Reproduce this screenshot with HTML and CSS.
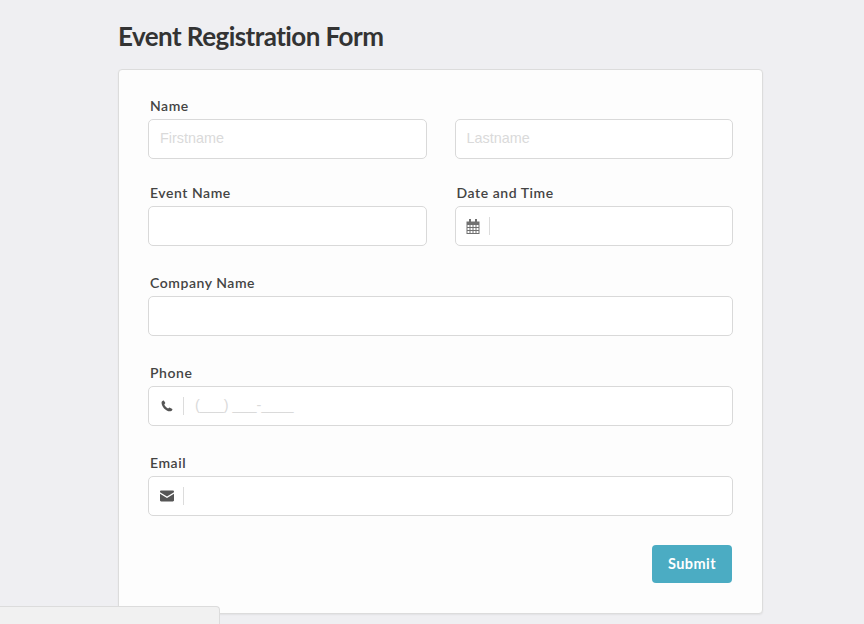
FILE: index.html
```html
<!DOCTYPE html>
<html lang="en">
<head>
<meta charset="utf-8">
<title>Event Registration Form</title>
<link rel="stylesheet" href="styles.css">
</head>
<body>
<main class="page">
  <h1 class="title">Event Registration Form</h1>
  <form class="card">
    <div class="row row-first">
      <div class="field">
        <label class="label">Name</label>
        <div class="box"><input class="input" placeholder="Firstname"></div>
      </div>
      <div class="field">
        <label class="label">&nbsp;</label>
        <div class="box"><input class="input" placeholder="Lastname"></div>
      </div>
    </div>
    <div class="row">
      <div class="field">
        <label class="label">Event Name</label>
        <div class="box"><input class="input"></div>
      </div>
      <div class="field">
        <label class="label">Date and Time</label>
        <div class="box">
          <span class="addon">
            <svg class="icon" width="14" height="15" viewBox="0 0 14 15"><path fill="#707070" fill-rule="evenodd" d="M3 0h2v2.500h4V0h2v2.500h2.500V15H.5V2.500H3zM1.500 6v2h2V6zm3 0v2h2V6zm3 0v2h2V6zm3 0v2h2V6zm-9 3v2h2V9zm3 0v2h2V9zm3 0v2h2V9zm3 0v2h2V9zm-9 3v2h2v-2zm3 0v2h2v-2zm3 0v2h2v-2zm3 0v2h2v-2z"/></svg>
          </span>
          <input class="input input-addon">
        </div>
      </div>
    </div>
    <div class="row row-wide">
      <div class="field">
        <label class="label">Company Name</label>
        <div class="box"><input class="input"></div>
      </div>
    </div>
    <div class="row row-wide">
      <div class="field">
        <label class="label">Phone</label>
        <div class="box">
          <span class="addon addon-short">
            <svg class="icon" width="12" height="12" viewBox="0 0 11 11"><path fill="#555" d="M2.600.4 4 2.800 3 4.100c.6 1.500 1.900 2.900 3.500 3.700l1.200-1 2.700 1.500c.3.900-.7 1.900-1.700 2.100C4.600 10.800.4 6 .5 2.300.5 1.300 1.500.3 2.600.4z"/></svg>
          </span>
          <input class="input input-addon" placeholder="(___) ___-____">
        </div>
      </div>
    </div>
    <div class="row row-wide">
      <div class="field">
        <label class="label">Email</label>
        <div class="box">
          <span class="addon addon-short">
            <svg class="icon" width="14" height="12" viewBox="0 0 14 11"><path fill="#555" d="M1.200 0h11.600C13.500 0 14 .5 14 1.200v.5L7 6 0 1.700v-.5C0 .5.500 0 1.200 0zM0 3.200 7 7.500l7-4.300v6.600c0 .7-.5 1.200-1.200 1.200H1.200C.5 11 0 10.500 0 9.800z"/></svg>
          </span>
          <input class="input input-addon">
        </div>
      </div>
    </div>
    <div class="actions">
      <button type="button" class="submit">Submit</button>
    </div>
  </form>
</main>
<div class="corner-panel"></div>
</body>
</html>
```
FILE: styles.css
```css
* { box-sizing: border-box; }
html, body { height: 100%; }
body {
  margin: 0;
  background: #efeff2;
  font-family: "Lato", "Liberation Sans", sans-serif;
  overflow: hidden;
}
.page {
  width: 645px;
  margin-left: 118px;
}
.title {
  margin: 0;
  padding: 20px 0 0 0;
  height: 69px;
  font-size: 26px;
  line-height: 32px;
  font-weight: 700;
  letter-spacing: -0.55px;
  color: #333;
}
.card {
  height: 545px;
  padding: 28px 29px 30px;
  background: #fdfdfd;
  border: 1px solid #dcdcdc;
  border-radius: 4px;
  box-shadow: 0 1px 2px rgba(0,0,0,.06);
}
.row {
  display: flex;
  gap: 28px;
  margin-top: 26px;
}
.row-first { margin-top: 0; }
.row-wide { margin-top: 29px; }
.field { flex: 1 1 0; min-width: 0; }
.label {
  display: block;
  height: 21px;
  margin-top: -1px;
  margin-bottom: 1px;
  padding-left: 2px;
  font-size: 14px;
  line-height: 17px;
  font-weight: 600;
  letter-spacing: .55px;
  color: #444;
}
.box {
  display: flex;
  align-items: center;
  height: 40px;
  background: #fff;
  border: 1px solid #d9d9d9;
  border-radius: 5px;
}
.input {
  flex: 1;
  min-width: 0;
  height: 100%;
  padding: 0 11px 2px;
  border: 0;
  outline: 0;
  background: transparent;
  font-family: "Liberation Sans", Arial, sans-serif;
  font-size: 14.4px;
}
.input::placeholder { color: #dadada; opacity: 1; }
.addon {
  display: flex;
  align-items: center;
  justify-content: center;
  flex: none;
  width: 34px;
  height: 18px;
  padding-left: 1px;
  border-right: 1px solid #dcdcdc;
}
.addon-short { width: 35px; padding-left: 2px; }
.icon { display: block; }
.actions {
  display: flex;
  justify-content: flex-end;
  margin-top: 29px;
}
.submit {
  width: 80px;
  height: 38px;
  margin-right: 1px;
  padding: 0 0 2px;
  border: 0;
  border-radius: 4px;
  background: #4bacc3;
  color: #fff;
  font-family: "Lato", sans-serif;
  font-size: 14.5px;
  font-weight: 700;
  letter-spacing: .45px;
}
.corner-panel {
  position: fixed;
  left: 0;
  bottom: 0;
  width: 220px;
  height: 18px;
  background: #f1f1f1;
  border: 1px solid #dcdcdc;
  border-width: 1px 1px 0 0;
  border-radius: 0 4px 0 0;
}
```
